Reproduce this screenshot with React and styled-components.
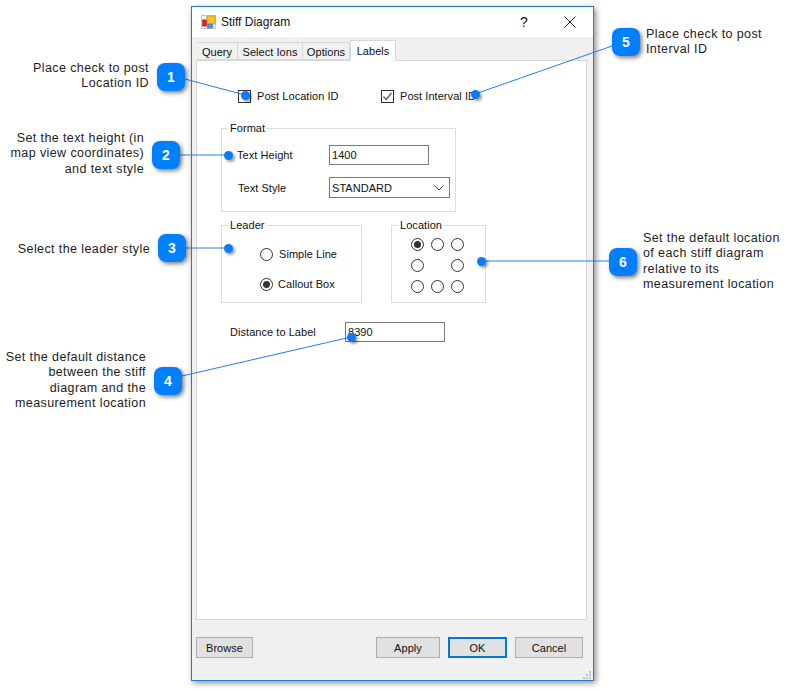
import React from 'react';
import styled, { createGlobalStyle } from 'styled-components';

const GlobalStyle = createGlobalStyle`
  html, body {
    margin: 0;
    padding: 0;
    background: #fff;
  }
  * {
    box-sizing: border-box;
  }
`;

const Stage = styled.div`
  position: relative;
  width: 786px;
  height: 691px;
  padding: 6px 0 0 191px;
  overflow: hidden;
  font-family: 'Liberation Sans', Arial, sans-serif;
`;

const Dialog = styled.div`
  position: relative;
  display: flex;
  flex-direction: column;
  width: 403px;
  height: 675px;
  border: 1px solid #1c7fcf;
  box-shadow: 2px 2px 6px rgba(0, 0, 0, 0.45);
  font-size: 11px;
  letter-spacing: 0.05px;
  color: #111;
`;

const TitleBar = styled.div`
  display: flex;
  align-items: center;
  height: 30px;
  padding-left: 9px;
  background: #fff;
`;

const TitleText = styled.span`
  margin-left: 5px;
  font-size: 12px;
  letter-spacing: 0;
`;

const TitleButton = styled.span`
  display: flex;
  align-items: center;
  justify-content: center;
  width: 46px;
  height: 30px;
  margin-left: ${({ $first }) => ($first ? 'auto' : '0')};
  font-size: 14px;
`;

const Body = styled.div`
  display: flex;
  flex: 1;
  flex-direction: column;
  padding: 0 6px 0 4px;
  background: #f0f0f0;
`;

const TabStrip = styled.div`
  display: flex;
  align-items: flex-end;
  height: 23px;
  padding-left: 1px;
`;

const Tab = styled.div`
  position: relative;
  z-index: ${({ $active }) => ($active ? 1 : 0)};
  display: flex;
  align-items: center;
  justify-content: center;
  width: ${({ $w }) => $w}px;
  height: ${({ $active }) => ($active ? 21 : 18)}px;
  margin-bottom: ${({ $active }) => ($active ? -1 : 0)}px;
  padding-top: ${({ $active }) => ($active ? 0 : 1)}px;
  border: 1px solid #d9d9d9;
  border-left-width: ${({ $active }) => ($active ? 1 : 0)}px;
  border-bottom-width: ${({ $active }) => ($active ? 0 : 1)}px;
  background: ${({ $active }) => ($active ? '#fff' : '#f0f0f0')};
`;

const Panel = styled.div`
  height: 560px;
  padding-top: 28px;
  border: 1px solid #d9d9d9;
  background: #fff;
`;

const CheckRow = styled.div`
  display: flex;
  padding-left: 41px;
`;

const CheckItem = styled.div`
  display: flex;
  align-items: center;
  gap: 6px;
  width: 143px;
  height: 14px;
`;

const CheckBox = styled.span`
  display: flex;
  align-items: center;
  justify-content: center;
  width: 13px;
  height: 13px;
  border: 1px solid #333;
  background: #fff;
`;

const Group = styled.fieldset`
  width: ${({ $w }) => $w}px;
  height: ${({ $h }) => $h}px;
  min-width: 0;
  margin: 0;
  padding: 0;
  border: 1px solid #dcdcdc;
`;

const Legend = styled.legend`
  margin-left: 6px;
  padding: 0 2px;
  line-height: 14px;
`;

const FormatGroup = styled(Group)`
  margin: 18px 0 0 24px;
`;

const FormatBody = styled.div`
  padding: 9px 0 0 15px;
`;

const FieldRow = styled.div`
  display: flex;
  align-items: center;
  height: 21px;
  margin-bottom: 12px;
`;

const FieldLabel = styled.span`
  width: 92px;
  padding-left: ${({ $indent }) => $indent || 0}px;
`;

const TextBox = styled.input`
  width: 100px;
  height: 20px;
  padding: 0 2px;
  border: 1px solid #7a7a7a;
  border-radius: 0;
  outline: none;
  background: #fff;
  font: 11px 'Liberation Sans', Arial, sans-serif;
  letter-spacing: 0.05px;
  color: #111;
`;

const SelectBox = styled.div`
  display: flex;
  align-items: center;
  justify-content: space-between;
  width: 121px;
  height: 21px;
  padding: 0 5px 0 2px;
  border: 1px solid #7a7a7a;
  background: #fff;
`;

const GroupRow = styled.div`
  display: flex;
  gap: 29px;
  margin: 6px 0 0 24px;
`;

const LeaderBody = styled.div`
  display: flex;
  flex-direction: column;
  gap: 16px;
  padding: 15px 0 0 38px;
`;

const RadioItem = styled.div`
  display: flex;
  align-items: center;
  gap: ${({ $gap }) => $gap}px;
  height: 14px;
`;

const Radio = styled.span`
  display: flex;
  align-items: center;
  justify-content: center;
  width: 13px;
  height: 13px;
  border: 1px solid #333;
  border-radius: 50%;
  background: #fff;

  &::after {
    content: '';
    display: ${({ $on }) => ($on ? 'block' : 'none')};
    width: 7px;
    height: 7px;
    border-radius: 50%;
    background: #333;
  }
`;

const LocationGrid = styled.div`
  display: grid;
  grid-template-columns: repeat(3, 13px);
  grid-auto-rows: 13px;
  gap: 8px 7px;
  padding: 6px 0 0 19px;
`;

const DistanceRow = styled.div`
  display: flex;
  align-items: center;
  margin: 19px 0 0 33px;
`;

const DistanceLabel = styled.span`
  width: 115px;
`;

const ButtonRow = styled.div`
  display: flex;
  gap: 8px;
  margin-top: 17px;
`;

const Button = styled.div`
  display: flex;
  align-items: center;
  justify-content: center;
  width: ${({ $w }) => $w}px;
  height: 21px;
  margin-right: ${({ $after }) => $after || 0}px;
  border: ${({ $primary }) => ($primary ? '2px solid #0078d7' : '1px solid #adadad')};
  background: #e1e1e1;
`;

const Grip = styled.svg`
  position: absolute;
  right: 1px;
  bottom: 1px;
`;

const Lines = styled.svg`
  position: absolute;
  top: 0;
  left: 0;
`;

const Dot = styled.span`
  position: absolute;
  left: ${({ $x }) => $x - 4.5}px;
  top: ${({ $y }) => $y - 4.5}px;
  width: 9px;
  height: 9px;
  border-radius: 50%;
  background: #0a7cf5;
  box-shadow: 2px 2px 3px rgba(0, 0, 0, 0.4);
`;

const Badge = styled.span`
  position: absolute;
  left: ${({ $x }) => $x}px;
  top: ${({ $y }) => $y}px;
  display: flex;
  align-items: center;
  justify-content: center;
  width: 28px;
  height: 28px;
  border-radius: 8px;
  background: #0080ff;
  box-shadow: 2px 2px 4px rgba(0, 0, 0, 0.5);
  color: #fff;
  font-size: 14px;
  font-weight: bold;
`;

const Note = styled.div`
  position: absolute;
  top: ${({ $y }) => $y}px;
  ${({ $left }) => ($left != null ? `left: ${$left}px;` : '')}
  ${({ $right }) => ($right != null ? `right: ${786 - $right}px; text-align: right;` : '')}
  font-size: 12.5px;
  line-height: 15.3px;
  letter-spacing: 0.4px;
  color: #222;
  white-space: nowrap;
`;

const callouts = [
  { n: 1, bx: 157, by: 63, dot: [245, 95], from: [185, 79], text: ['Place check to post', 'Location ID'], right: 149, y: 61 },
  { n: 2, bx: 152, by: 141, dot: [228, 155], from: [180, 155], text: ['Set the text height (in', 'map view coordinates)', 'and text style'], right: 144, y: 131 },
  { n: 3, bx: 158, by: 234, dot: [228, 248], from: [185, 248], text: ['Select the leader style'], right: 150, y: 242 },
  { n: 4, bx: 154, by: 367, dot: [351, 337], from: [182, 376], text: ['Set the default distance', 'between the stiff', 'diagram and the', 'measurement location'], right: 146, y: 350 },
  { n: 5, bx: 612, by: 28, dot: [475, 94], from: [612, 46], text: ['Place check to post', 'Interval ID'], left: 646, y: 27 },
  { n: 6, bx: 609, by: 248, dot: [481, 261], from: [609, 261], text: ['Set the default location', 'of each stiff diagram', 'relative to its', 'measurement location'], left: 643, y: 231 },
];

const tabs = [
  { label: 'Query', w: 41 },
  { label: 'Select Ions', w: 65 },
  { label: 'Options', w: 47 },
  { label: 'Labels', w: 46, active: true },
];

const locationCells = [true, false, false, false, null, false, false, false, false];

const AppIcon = () => (
  <svg width="15" height="14" viewBox="0 0 15 14">
    <rect x="0.5" y="0.5" width="14" height="13" fill="#f4f4f4" stroke="#c4c4c4" />
    <path d="M0 4.5H6M5.5 0V14M0 11.5H15" stroke="#d4d4d4" fill="none" />
    <rect x="6" y="1" width="8" height="8" fill="#f6c32c" stroke="#d09a14" strokeWidth="0.8" />
    <rect x="1.5" y="5" width="4" height="6" fill="#d8251c" stroke="#a81810" strokeWidth="0.5" />
    <rect x="6.5" y="9" width="5" height="4" fill="#4f8fe6" stroke="#3a6cc0" strokeWidth="0.5" />
  </svg>
);

const App = () => (
  <>
    <GlobalStyle />
    <Stage>
      <Dialog>
        <TitleBar>
          <AppIcon />
          <TitleText>Stiff Diagram</TitleText>
          <TitleButton $first>?</TitleButton>
          <TitleButton>
            <svg width="12" height="12" viewBox="0 0 12 12">
              <path d="M0.5 0.5L11.5 11.5M11.5 0.5L0.5 11.5" stroke="#222" strokeWidth="1" fill="none" />
            </svg>
          </TitleButton>
        </TitleBar>
        <Body>
          <TabStrip>
            {tabs.map((t) => (
              <Tab key={t.label} $w={t.w} $active={t.active}>{t.label}</Tab>
            ))}
          </TabStrip>
          <Panel>
            <CheckRow>
              <CheckItem>
                <CheckBox />
                <span>Post Location ID</span>
              </CheckItem>
              <CheckItem>
                <CheckBox>
                  <svg width="11" height="11" viewBox="0 0 11 11">
                    <path d="M1.5 5.5L4.2 8.5L9.5 2" stroke="#555" strokeWidth="1.2" fill="none" />
                  </svg>
                </CheckBox>
                <span>Post Interval ID</span>
              </CheckItem>
            </CheckRow>
            <FormatGroup $w={235} $h={91}>
              <Legend>Format</Legend>
              <FormatBody>
                <FieldRow>
                  <FieldLabel>Text Height</FieldLabel>
                  <TextBox readOnly value="1400" />
                </FieldRow>
                <FieldRow>
                  <FieldLabel $indent={1}>Text Style</FieldLabel>
                  <SelectBox>
                    STANDARD
                    <svg width="10" height="6" viewBox="0 0 10 6">
                      <path d="M0.5 0.5L5 5L9.5 0.5" stroke="#444" strokeWidth="1" fill="none" />
                    </svg>
                  </SelectBox>
                </FieldRow>
              </FormatBody>
            </FormatGroup>
            <GroupRow>
              <Group $w={141} $h={85}>
                <Legend>Leader</Legend>
                <LeaderBody>
                  <RadioItem $gap={6}>
                    <Radio />
                    <span>Simple Line</span>
                  </RadioItem>
                  <RadioItem $gap={5}>
                    <Radio $on />
                    <span>Callout Box</span>
                  </RadioItem>
                </LeaderBody>
              </Group>
              <Group $w={95} $h={85}>
                <Legend>Location</Legend>
                <LocationGrid>
                  {locationCells.map((on, i) => (on === null ? <span key={i} /> : <Radio key={i} $on={on} />))}
                </LocationGrid>
              </Group>
            </GroupRow>
            <DistanceRow>
              <DistanceLabel>Distance to Label</DistanceLabel>
              <TextBox readOnly value="8390" />
            </DistanceRow>
          </Panel>
          <ButtonRow>
            <Button $w={57} $after={115}>Browse</Button>
            <Button $w={64}>Apply</Button>
            <Button $w={59} $primary>OK</Button>
            <Button $w={68}>Cancel</Button>
          </ButtonRow>
        </Body>
        <Grip width="9" height="9" viewBox="0 0 9 9">
          <path d="M6 1h2v2H6zM3 4h2v2H3zM6 4h2v2H6zM0 7h2v2H0zM3 7h2v2H3zM6 7h2v2H6z" fill="#c4c4c4" />
        </Grip>
      </Dialog>

      <Lines width="786" height="691">
        {callouts.map((c) => (
          <line key={c.n} x1={c.from[0]} y1={c.from[1]} x2={c.dot[0]} y2={c.dot[1]} stroke="#1f80f0" strokeWidth="1" />
        ))}
      </Lines>
      {callouts.map((c) => (
        <React.Fragment key={c.n}>
          <Dot $x={c.dot[0]} $y={c.dot[1]} />
          <Badge $x={c.bx} $y={c.by}>{c.n}</Badge>
          <Note $left={c.left} $right={c.right} $y={c.y}>
            {c.text.map((line) => (
              <div key={line}>{line}</div>
            ))}
          </Note>
        </React.Fragment>
      ))}
    </Stage>
  </>
);

export default App;
